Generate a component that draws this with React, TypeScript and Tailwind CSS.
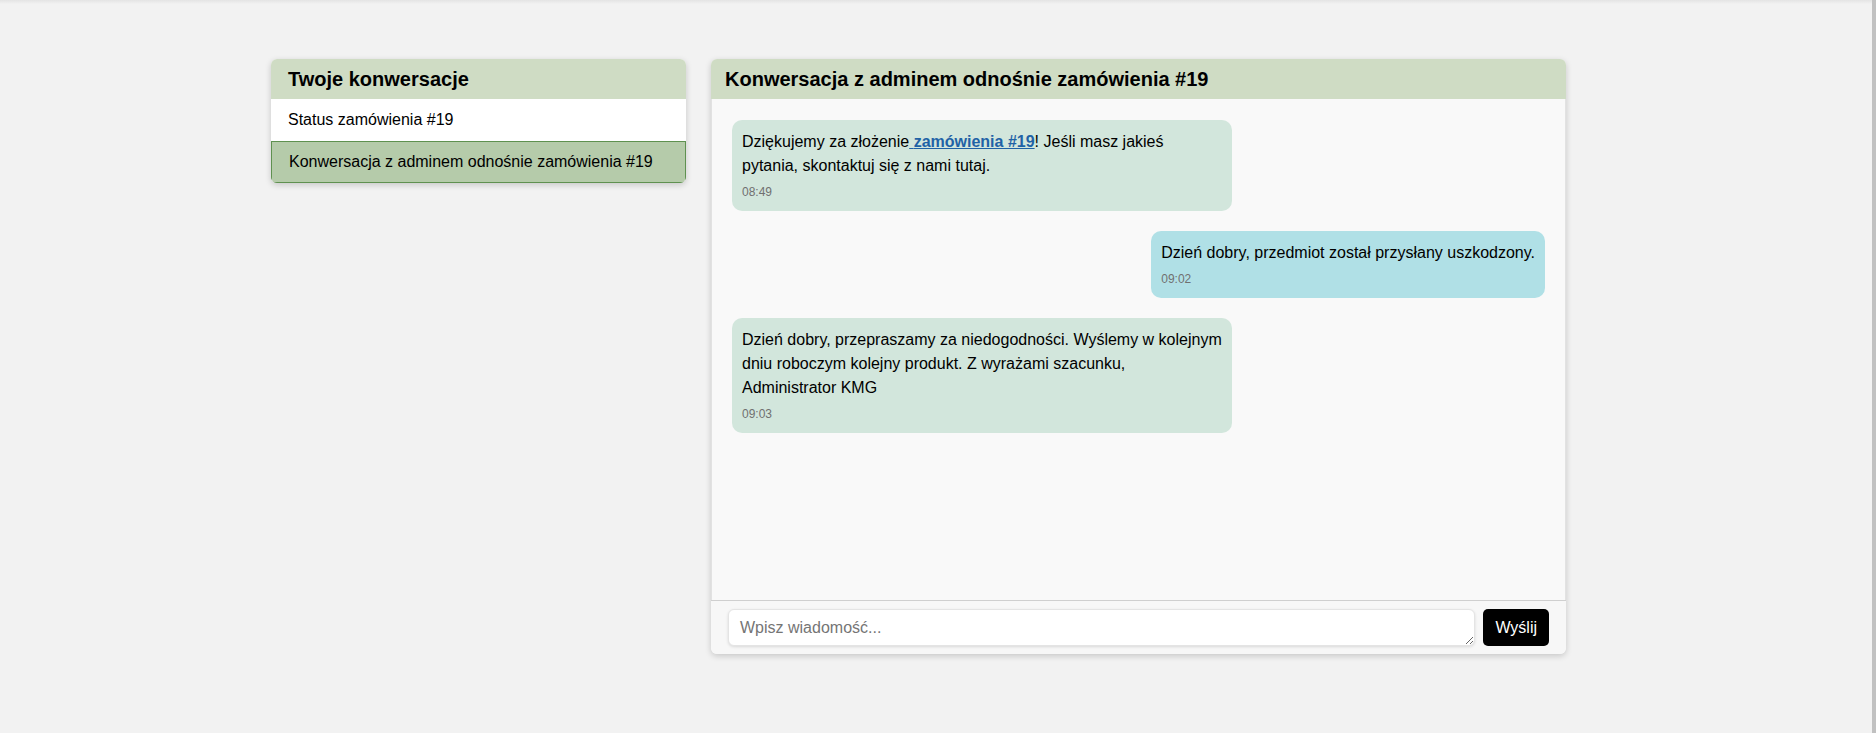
import React from "react";

type Message = {
  id: number;
  mine: boolean;
  time: string;
  body: React.ReactNode;
};

const CONVERSATIONS = [
  { id: 1, title: "Status zamówienia #19", active: false },
  { id: 2, title: "Konwersacja z adminem odnośnie zamówienia #19", active: true },
];

const MESSAGES: Message[] = [
  {
    id: 1,
    mine: false,
    time: "08:49",
    body: (
      <>
        Dziękujemy za złożenie
        <a href="#" className="font-bold text-[#1f62a6] underline">
          {" "}zamówienia #19
        </a>
        ! Jeśli masz jakieś pytania, skontaktuj się z nami tutaj.
      </>
    ),
  },
  {
    id: 2,
    mine: true,
    time: "09:02",
    body: "Dzień dobry, przedmiot został przysłany uszkodzony.",
  },
  {
    id: 3,
    mine: false,
    time: "09:03",
    body: "Dzień dobry, przepraszamy za niedogodności. Wyślemy w kolejnym dniu roboczym kolejny produkt. Z wyrażami szacunku, Administrator KMG",
  },
];

function ConversationList() {
  return (
    <section className="w-[415px] self-start overflow-hidden rounded-md bg-white shadow-[0_2px_6px_rgba(0,0,0,0.18)]">
      <h2 className="flex h-[40px] items-center bg-[#cfdcc4] pl-[17px] text-[20px] font-bold text-black">
        Twoje konwersacje
      </h2>
      <ul>
        {CONVERSATIONS.map((conversation) => (
          <li
            key={conversation.id}
            className={`flex h-[42px] items-center pl-[17px] text-[16px] text-black ${
              conversation.active ? "border border-[#5f9150] bg-[#b5cbaa] pl-[16px]" : "bg-white"
            }`}
          >
            {conversation.title}
          </li>
        ))}
      </ul>
    </section>
  );
}

function ChatPanel() {
  return (
    <section className="flex h-[595px] w-[855px] flex-col overflow-hidden rounded-md bg-[#f9f9f9] shadow-[0_2px_6px_rgba(0,0,0,0.18)]">
      <h2 className="flex h-[40px] shrink-0 items-center bg-[#cfdcc4] pl-[14px] text-[20px] font-bold text-black">
        Konwersacja z adminem odnośnie zamówienia #19
      </h2>

      <div className="flex flex-1 flex-col gap-5 border-x border-[#e2e2e2] px-5 pt-[21px]">
        {MESSAGES.map((message) => (
          <div key={message.id} className={`flex ${message.mine ? "justify-end" : "justify-start"}`}>
            <div
              className={`max-w-[500px] rounded-[10px] p-[10px] text-[16px] leading-6 text-black ${
                message.mine ? "bg-[#b0e0e6]" : "bg-[#d2e6dc]"
              }`}
            >
              <p>{message.body}</p>
              <p className="mt-[5px] text-[12px] leading-[18px] text-[#707070]">{message.time}</p>
            </div>
          </div>
        ))}
      </div>

      <div className="flex shrink-0 items-start gap-2 border-t border-[#cfcfcf] bg-[#f7f7f7] px-[17px] pt-2 pb-[8px]">
        <textarea
          rows={1}
          placeholder="Wpisz wiadomość..."
          className="h-[37px] flex-1 rounded-md border border-[#e4e4e4] bg-white px-[11px] py-[8px] text-[16px] leading-[19px] text-black shadow-[0_1px_3px_rgba(0,0,0,0.12)] outline-none placeholder:text-[#757575]"
        />
        <button
          type="button"
          className="h-[37px] rounded-[5px] bg-black px-[12px] text-[16px] text-white"
        >
          Wyślij
        </button>
      </div>
    </section>
  );
}

export default function App() {
  return (
    <div className="flex min-h-[733px] bg-[#f2f2f2] font-['Liberation_Sans',Arial,sans-serif]">
      <div className="flex flex-1 flex-col">
        <div className="h-[4px] bg-linear-to-b from-[#e4e4e4] to-[#f2f2f2]" />
        <main className="flex gap-[25px] pt-[55px] pl-[271px]">
          <ConversationList />
          <ChatPanel />
        </main>
      </div>
      <div className="w-[4px] bg-[#c1c1c1]" />
    </div>
  );
}
